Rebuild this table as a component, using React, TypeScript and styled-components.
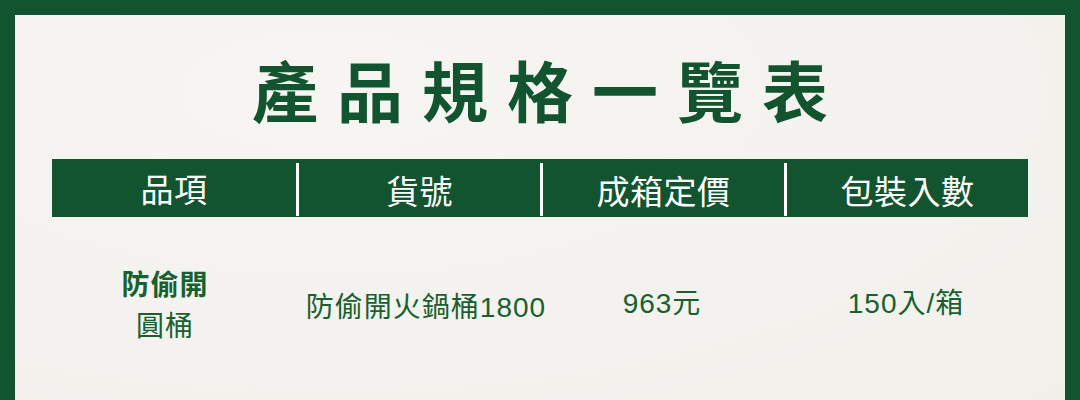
import React from 'react';
import styled, { createGlobalStyle } from 'styled-components';

const GREEN = '#11542f';

const GlobalStyle = createGlobalStyle`
  html, body {
    margin: 0;
    padding: 0;
    height: 400px;
    overflow: hidden;
    background: ${GREEN};
  }
  * { box-sizing: border-box; }
`;

type TColumn = {
  key: string;
  title: string;
};

const columns: TColumn[] = [
  { key: 'name', title: '品項' },
  { key: 'code', title: '貨號' },
  { key: 'price', title: '成箱定價' },
  { key: 'pack', title: '包裝入數' },
];

const Frame = styled.div`
  height: 400px;
  padding: 15px 15px 0;
  background: ${GREEN};
`;

const Paper = styled.div`
  height: 100%;
  padding: 0 37px;
  background: radial-gradient(ellipse at 30% 20%, #f6f5f2 0%, #f3f2ee 60%, #f1f0eb 100%);
  font-family: "Liberation Sans", "Noto Sans CJK TC", sans-serif;
`;

const Title = styled.h1`
  margin: 0;
  padding: 33px 0 0 19px;
  height: 144px;
  text-align: center;
  font-size: 66px;
  line-height: 80px;
  font-weight: 700;
  letter-spacing: 19px;
  color: ${GREEN};
  font-family: "Noto Sans CJK TC", sans-serif;
`;

const HeaderBar = styled.div`
  display: grid;
  grid-template-columns: repeat(4, 1fr);
  height: 58px;
  background: ${GREEN};
`;

const HeaderCell = styled.div<{ $divider: boolean }>`
  display: flex;
  align-items: center;
  justify-content: center;
  color: #ffffff;
  font-size: 33px;
  letter-spacing: 0.5px;
  font-family: "Noto Sans CJK TC", sans-serif;
  border-left: ${({ $divider }) => ($divider ? '3px solid #ffffff' : 'none')};
  margin: ${({ $divider }) => ($divider ? '4px 0 1px' : '0')};
`;

const Row = styled.div`
  display: grid;
  grid-template-columns: repeat(4, 1fr);
  align-items: center;
  height: 172px;
  color: #17602f;
  font-size: 28px;
`;

const Cell = styled.div<{ $shift: number; $drop?: number; $bold?: boolean }>`
  text-align: center;
  transform: translate(${({ $shift }) => $shift}px, ${({ $drop }) => $drop ?? 0}px);
  font-weight: ${({ $bold }) => ($bold ? 700 : 400)};
  line-height: 41px;
  letter-spacing: 1px;
`;

const Light = styled.span`
  font-weight: 400;
`;

export default function App() {
  return (
    <>
      <GlobalStyle />
      <Frame>
        <Paper>
          <Title>產品規格一覽表</Title>
          <HeaderBar>
            {columns.map((c, i) => (
              <HeaderCell key={c.key} $divider={i > 0}>
                {c.title}
              </HeaderCell>
            ))}
          </HeaderBar>
          <Row>
            <Cell $shift={-9} $drop={3} $bold>
              防偷開
              <br />
              <Light>圓桶</Light>
            </Cell>
            <Cell $shift={8} $drop={4}>防偷開火鍋桶1800</Cell>
            <Cell $shift={0}>963元</Cell>
            <Cell $shift={0}>150入/箱</Cell>
          </Row>
        </Paper>
      </Frame>
    </>
  );
}
